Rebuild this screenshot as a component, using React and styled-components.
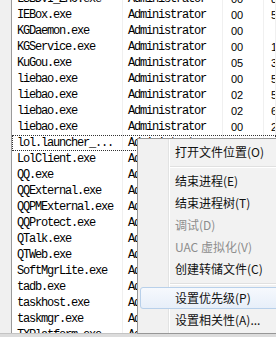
import React from 'react';
import styled, { createGlobalStyle, css } from 'styled-components';

const GlobalStyle = createGlobalStyle`
  html, body {
    margin: 0;
    padding: 0;
    background: #fff;
  }
`;

const Screen = styled.div`
  position: relative;
  width: 276px;
  height: 337px;
  overflow: hidden;
  background: #f0f0f0;
  display: flex;
  flex-direction: column;
`;

const ListView = styled.div`
  height: 333px;
  margin-left: 11px;
  border-left: 1px solid #9a9a9a;
  background: #fff;
  overflow: hidden;
  flex: none;
`;

const Rows = styled.div`
  margin-top: -9px;
`;

const Row = styled.div`
  display: grid;
  grid-template-columns: 111px 100px 41px 1fr;
  height: 16px;
  ${p => p.focused && css`
    outline: 1px dotted #333;
    outline-offset: -1px;
  `}
`;

const Cell = styled.div`
  padding-left: 5px;
  border-right: 1px solid #f0f0f0;
  font-family: "Liberation Mono", monospace;
  font-size: 12px;
  letter-spacing: -1.2px;
  line-height: 16px;
  color: #000;
  white-space: nowrap;
  overflow: hidden;
`;

const NumCell = styled.div`
  padding-left: ${p => p.pad}px;
  border-right: 1px solid #f0f0f0;
  font-family: "Liberation Sans", Arial, sans-serif;
  font-size: 11px;
  line-height: 16px;
  color: #000;
  white-space: nowrap;
  overflow: hidden;
`;

const Footer = styled.div`
  flex: 1;
  background: #dcdcdc;
  border-top: 1px solid #c4c4c4;
`;

const Menu = styled.div`
  position: absolute;
  left: 137px;
  top: 138px;
  width: 152px;
  padding: 2px;
  border: 1px solid #979797;
  background: linear-gradient(to right, #f1f1f1 0, #f1f1f1 30px, #e2e3e3 30px, #e2e3e3 31px, #fff 31px, #fff 32px, #f2f2f2 32px);
  font-family: "Noto Sans CJK SC", "Microsoft YaHei", sans-serif;
  font-size: 12px;
`;

const Item = styled.div`
  height: 22px;
  line-height: 22px;
  padding-left: 35px;
  box-sizing: border-box;
  color: ${p => (p.disabled ? '#8d8d8d' : '#111')};
  white-space: nowrap;
  border: 1px solid transparent;
  border-radius: 3px;
  ${p => p.hover && css`
    border-color: #b8d0ea;
    background: linear-gradient(#f6f9fd, #e7eff9);
  `}
`;

const ItemText = styled.span`
  position: relative;
  left: -1px;
  top: -1px;
`;

const Separator = styled.div`
  height: 7px;
  display: flex;
  align-items: center;
  padding-left: 30px;
  &::after {
    content: '';
    flex: 1;
    height: 1px;
    background: #e0e0e0;
    box-shadow: 0 1px 0 #fff;
  }
`;

const processes = [
  ['LSBDVI_ZHO.exe', 'Administrator', '00', '8 412 K'],
  ['IEBox.exe', 'Administrator', '00', '5 216 K'],
  ['KGDaemon.exe', 'Administrator', '00', ''],
  ['KGService.exe', 'Administrator', '00', '1 904 K'],
  ['KuGou.exe', 'Administrator', '05', '3 680 K'],
  ['liebao.exe', 'Administrator', '00', '5 132 K'],
  ['liebao.exe', 'Administrator', '02', '5 744 K'],
  ['liebao.exe', 'Administrator', '02', '6 020 K'],
  ['liebao.exe', 'Administrator', '00', '2 316 K'],
  ['lol.launcher_...', 'Administrator', '00', '1 208 K'],
  ['LolClient.exe', 'Administrator', '00', '9 512 K'],
  ['QQ.exe', 'Administrator', '00', '4 812 K'],
  ['QQExternal.exe', 'Administrator', '00', '1 604 K'],
  ['QQPMExternal.exe', 'Administrator', '00', '2 112 K'],
  ['QQProtect.exe', 'Administrator', '00', '1 336 K'],
  ['QTalk.exe', 'Administrator', '00', '3 020 K'],
  ['QTWeb.exe', 'Administrator', '00', '2 448 K'],
  ['SoftMgrLite.exe', 'Administrator', '00', '6 604 K'],
  ['tadb.exe', 'Administrator', '00', '1 120 K'],
  ['taskhost.exe', 'Administrator', '00', '3 404 K'],
  ['taskmgr.exe', 'Administrator', '00', '2 880 K'],
  ['TXPlatform.exe', 'Administrator', '00', '1 556 K'],
];

const menu = [
  { label: '打开文件位置(O)' },
  { sep: true },
  { label: '结束进程(E)' },
  { label: '结束进程树(T)' },
  { label: '调试(D)', disabled: true },
  { label: 'UAC 虚拟化(V)', disabled: true },
  { label: '创建转储文件(C)' },
  { sep: true },
  { label: '设置优先级(P)', hover: true },
  { label: '设置相关性(A)...' },
];

export default function App() {
  return (
    <Screen>
      <GlobalStyle />
      <ListView>
        <Rows>
          {processes.map((p, i) => (
            <Row key={i} focused={p[0].startsWith('lol.')}>
              <Cell>{p[0]}</Cell>
              <Cell>{p[1]}</Cell>
              <NumCell pad={8}>{p[2]}</NumCell>
              <NumCell pad={7}>{p[3]}</NumCell>
            </Row>
          ))}
        </Rows>
      </ListView>
      <Footer />
      <Menu>
        {menu.map((m, i) =>
          m.sep ? (
            <Separator key={i} />
          ) : (
            <Item key={i} disabled={m.disabled} hover={m.hover}>
              <ItemText>{m.label}</ItemText>
            </Item>
          )
        )}
      </Menu>
    </Screen>
  );
}
